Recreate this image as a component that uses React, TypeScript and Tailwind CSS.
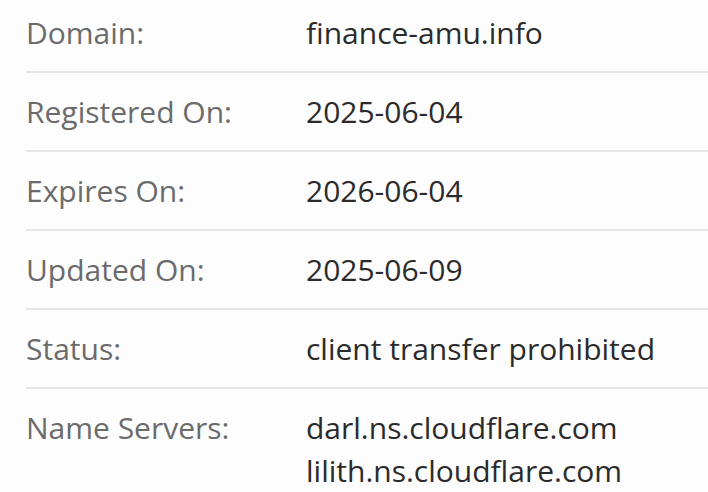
const rows: { label: string; values: string[] }[] = [
  { label: "Domain:", values: ["finance-amu.info"] },
  { label: "Registered On:", values: ["2025-06-04"] },
  { label: "Expires On:", values: ["2026-06-04"] },
  { label: "Updated On:", values: ["2025-06-09"] },
  { label: "Status:", values: ["client transfer prohibited"] },
  { label: "Name Servers:", values: ["darl.ns.cloudflare.com", "lilith.ns.cloudflare.com"] },
];

export default function App() {
  return (
    <div className="w-[708px] h-[492px] overflow-hidden bg-[#fdfdfd] font-['Open_Sans',sans-serif] text-[30px] leading-[43px]">
      <div className="mt-[-6px] ml-[26px]">
        {rows.map((row, i) => (
          <div
            key={row.label}
            className={`flex py-[17px] ${i < rows.length - 1 ? "border-b-2 border-[#e6e6e6]" : ""}`}
          >
            <div className="w-[280px] shrink-0 text-[#6b6b6b]">{row.label}</div>
            <div className="text-[#2b2b2b]">
              {row.values.map((v) => (
                <div key={v}>{v}</div>
              ))}
            </div>
          </div>
        ))}
      </div>
    </div>
  );
}
